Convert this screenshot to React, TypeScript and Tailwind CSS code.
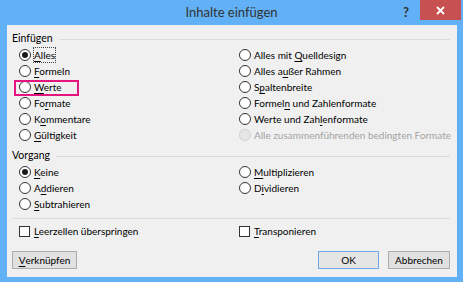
import React from "react";

const U = ({ c }: { c: string }) => <span className="underline underline-offset-[2px] decoration-1">{c}</span>;

function Label({ text, uIdx }: { text: string; uIdx?: number }) {
  if (uIdx === undefined) return <>{text}</>;
  return (
    <>
      {text.slice(0, uIdx)}
      <U c={text[uIdx]} />
      {text.slice(uIdx + 1)}
    </>
  );
}

function Radio({
  text,
  uIdx,
  checked,
  disabled,
  focus,
}: {
  text: string;
  uIdx?: number;
  checked?: boolean;
  disabled?: boolean;
  focus?: boolean;
}) {
  return (
    <div className="h-[16px] flex items-center">
      <div
        className={
          disabled
            ? "w-[12px] h-[12px] rounded-full border border-[#cfcfcf] bg-[#e6e6e6] flex items-center justify-center shrink-0"
            : "w-[12px] h-[12px] rounded-full border border-[#333333] bg-white flex items-center justify-center shrink-0"
        }
      >
        {checked && <div className="w-[6px] h-[6px] rounded-full bg-[#1a1a1a]" />}
      </div>
      <span
        className={
          (disabled ? "text-[#a3a3a3] " : "text-black ") +
          "ml-[3px] leading-[14px] whitespace-nowrap " +
          (focus ? "outline outline-1 outline-dotted outline-[#444] outline-offset-[0px]" : "")
        }
      >
        <Label text={text} uIdx={uIdx} />
      </span>
    </div>
  );
}

function Check({ text, uIdx }: { text: string; uIdx?: number }) {
  return (
    <div className="h-[16px] flex items-center">
      <div className="w-[11px] h-[11px] border border-[#333333] bg-white shrink-0" />
      <span className="ml-[4px] whitespace-nowrap">
        <Label text={text} uIdx={uIdx} />
      </span>
    </div>
  );
}

function Header({ text }: { text: string }) {
  return (
    <div className="h-[16px] flex items-center pl-[5px] pr-[7px]">
      <span className="whitespace-nowrap text-[10.5px]">{text}</span>
      <div className="flex-1 ml-[6px] h-px bg-[#dcdcdc]" />
    </div>
  );
}

export default function App() {
  return (
    <div
      className="w-[463px] h-[282px] bg-[#62b1f6] flex flex-col text-[10px] text-black"
      style={{ fontFamily: 'Lato, "Noto Sans", sans-serif' }}
    >
      <div className="h-[25px] relative flex items-center justify-center shrink-0">
        <span className="text-[13px] text-[#333333] pt-[1px]">Inhalte einfügen</span>
        <span className="absolute left-[403px] top-[3px] text-[13px] font-bold text-[#333333]">?</span>
        <div className="absolute left-[420px] top-0 w-[41px] h-[20px] bg-[#c75050] flex items-center justify-center">
          <svg width="9" height="9" viewBox="0 0 9 9">
            <path d="M1 1 L8 8 M8 1 L1 8" stroke="white" strokeWidth="1.8" />
          </svg>
        </div>
      </div>
      <div className="ml-[7px] w-[450px] h-[252px] bg-[#f0f0f0] relative flex flex-col">
        <div className="h-[6px]" />
        <Header text="Einfügen" />
        <div className="grid grid-cols-[220px_1fr] pl-[12px]">
          <div className="flex flex-col">
            <Radio text="Alles" uIdx={0} checked focus />
            <Radio text="Formeln" uIdx={0} />
            <Radio text="Werte" uIdx={0} />
            <Radio text="Formate" uIdx={2} />
            <Radio text="Kommentare" uIdx={1} />
            <Radio text="Gültigkeit" uIdx={0} />
          </div>
          <div className="flex flex-col">
            <Radio text="Alles mit Quelldesign" uIdx={10} />
            <Radio text="Alles außer Rahmen" uIdx={7} />
            <Radio text="Spaltenbreite" uIdx={1} />
            <Radio text="Formeln und Zahlenformate" uIdx={6} />
            <Radio text="Werte und Zahlenformate" uIdx={13} />
            <Radio text="Alle zusammenführenden bedingten Formate" disabled />
          </div>
        </div>
        <div className="h-[5px]" />
        <Header text="Vorgang" />
        <div className="grid grid-cols-[220px_1fr] pl-[12px]">
          <div className="flex flex-col">
            <Radio text="Keine" uIdx={0} checked />
            <Radio text="Addieren" uIdx={1} />
            <Radio text="Subtrahieren" uIdx={0} />
          </div>
          <div className="flex flex-col">
            <Radio text="Multiplizieren" uIdx={0} />
            <Radio text="Dividieren" uIdx={1} />
          </div>
        </div>
        <div className="mt-[6px] ml-[5px] mr-[7px] h-px bg-[#dcdcdc]" />
        <div className="mt-[4px] grid grid-cols-[220px_1fr] pl-[12px]">
          <Check text="Leerzellen überspringen" uIdx={0} />
          <Check text="Transponieren" uIdx={0} />
        </div>
        <div className="mt-[12px] flex pl-[5px] pr-[7px]">
          <button className="w-[65px] h-[18px] border border-[#acacac] bg-[#e1e1e1] flex items-center justify-center">
            <Label text="Verknüpfen" uIdx={0} />
          </button>
          <div className="flex-1" />
          <button className="w-[61px] h-[18px] border border-[#6fa8e4] bg-[#e5e5e5] flex items-center justify-center">
            OK
          </button>
          <button className="ml-[9px] w-[62px] h-[18px] border border-[#acacac] bg-[#e1e1e1] flex items-center justify-center">
            Abbrechen
          </button>
        </div>
        <div className="absolute left-[7px] top-[55px] w-[65px] h-[16px] border-2 border-[#e4157f]" />
      </div>
    </div>
  );
}
